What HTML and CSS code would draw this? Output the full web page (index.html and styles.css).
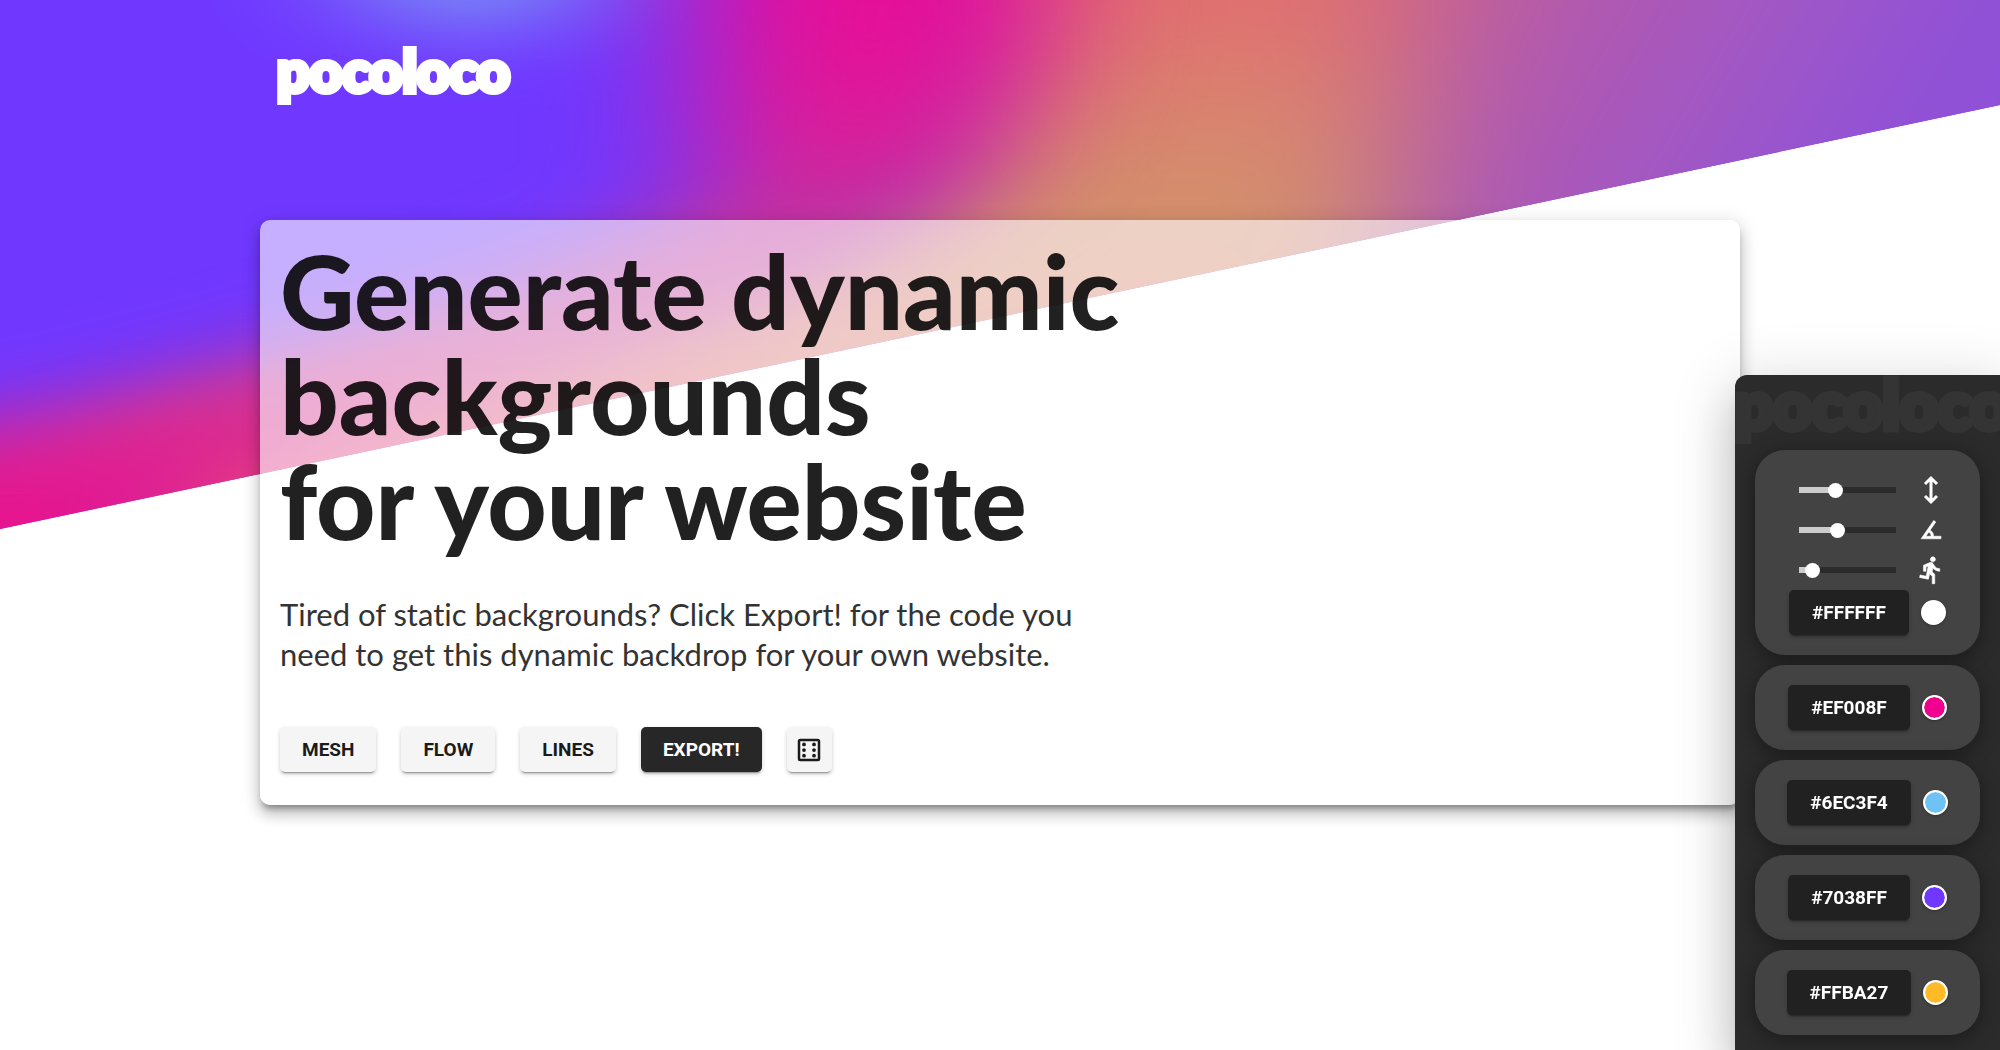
FILE: index.html
```
<!DOCTYPE html>
<html lang="en">
  <head>
    <meta charset="utf-8">
    <title>pocoloco</title>
    <link rel="stylesheet" href="styles.css">
  </head>
  <body>
    <svg class="backdrop" viewBox="0 0 2000 529" preserveAspectRatio="none" aria-hidden="true">
      <defs>
        <clipPath id="slope"><path d="M0 0H2000V105L0 529Z"/></clipPath>
        <filter id="wide" filterUnits="userSpaceOnUse" x="-600" y="-600" width="3200" height="1800" color-interpolation-filters="sRGB">
          <feGaussianBlur stdDeviation="80 30"/>
        </filter>
        <filter id="soft" filterUnits="userSpaceOnUse" x="-600" y="-600" width="3200" height="1800" color-interpolation-filters="sRGB">
          <feGaussianBlur stdDeviation="76 36"/>
        </filter>
        <linearGradient id="right" x1="1300" y1="0" x2="1800" y2="300" gradientUnits="userSpaceOnUse">
          <stop offset="0" stop-color="#cc6a86"/>
          <stop offset=".4" stop-color="#b258ae"/>
          <stop offset=".75" stop-color="#9e58c8"/>
          <stop offset="1" stop-color="#8f50d8"/>
        </linearGradient>
        <linearGradient id="warm" x1="0" y1="0" x2="0" y2="500" gradientUnits="userSpaceOnUse">
          <stop offset="0" stop-color="#e07070"/>
          <stop offset=".26" stop-color="#d8866f"/>
          <stop offset=".44" stop-color="#d2906c"/>
          <stop offset=".7" stop-color="#da8070"/>
          <stop offset="1" stop-color="#e84c7c"/>
        </linearGradient>
        <linearGradient id="pink" x1="0" y1="0" x2="0" y2="530" gradientUnits="userSpaceOnUse">
          <stop offset="0" stop-color="#e60e98"/>
          <stop offset=".25" stop-color="#dc1c98"/>
          <stop offset=".42" stop-color="#c4309c"/>
          <stop offset=".65" stop-color="#d03c90"/>
          <stop offset=".85" stop-color="#e0208f"/>
          <stop offset="1" stop-color="#e8128f"/>
        </linearGradient>
      </defs>
      <g clip-path="url(#slope)">
        <path fill="#7038ff" d="M0 0H2000V529H0Z"/>
        <g filter="url(#wide)">
          <path fill="url(#right)" d="M1350-400H2600V1000H1350Z"/>
          <path fill="url(#warm)" d="M950-400H1440L1400 100L1350 600L100 900V440L480 350L700 290L900 200L940 100Z"/>
        </g>
        <g filter="url(#soft)">
          <path fill="url(#pink)" d="M700-400H1070L1040 60L970 190L830 280L560 380L330 450L200 500L120 700H-400V425L0 425L280 355L520 290L700 210L700 100Z"/>
          <ellipse fill="#7c98f4" cx="470" cy="-30" rx="120" ry="60"/>
        </g>
      </g>
    </svg>

    <div class="container">
      <header class="header">
        <a class="logo" href="#">pocoloco</a>
      </header>
      <main class="card">
        <h1>Generate dynamic<br>backgrounds<br>for your website</h1>
        <p>
          Tired of static backgrounds? Click Export! for the code you<br>
          need to get this dynamic backdrop for your own website.
        </p>
        <div class="actions">
          <button class="btn" type="button">MESH</button>
          <button class="btn" type="button">FLOW</button>
          <button class="btn" type="button">LINES</button>
          <button class="btn btn-dark" type="button">EXPORT!</button>
          <button class="btn btn-icon" type="button" aria-label="Randomize">
            <svg class="icon" viewBox="0 0 24 24">
              <rect x="4" y="4" width="16" height="16" rx="1" fill="none" stroke="currentColor" stroke-width="2"/>
              <circle cx="8" cy="7.5" r="1.5"/><circle cx="8" cy="12" r="1.5"/><circle cx="8" cy="16.5" r="1.5"/>
              <circle cx="16" cy="7.5" r="1.5"/><circle cx="16" cy="12" r="1.5"/><circle cx="16" cy="16.5" r="1.5"/>
            </svg>
          </button>
        </div>
      </main>
    </div>

    <aside class="panel">
      <div class="panel-logo" aria-hidden="true">pocoloco</div>
      <div class="group">
        <label class="setting">
          <input class="slider" type="range" min="0" max="100" value="35" style="--value: 35%" aria-label="Height">
          <svg class="icon" viewBox="0 0 24 24">
            <path d="M12 3V21M7.2 7.2L12 2.4L16.8 7.2M7.2 16.8L12 21.6L16.8 16.8" fill="none" stroke="currentColor" stroke-width="2.4"/>
          </svg>
        </label>
        <label class="setting">
          <input class="slider" type="range" min="0" max="100" value="38" style="--value: 38%" aria-label="Angle">
          <svg class="icon" viewBox="0 0 24 24">
            <path stroke="currentColor" stroke-width=".5" d="M20,19H4.09L14.18,4.43L15.82,5.57L11.28,12.13C12.89,12.96 14,14.62 14,16.54C14,16.7 14,16.85 13.97,17H20V19M7.91,17H11.96C12,16.85 12,16.7 12,16.54C12,15.28 11.24,14.22 10.14,13.78L7.91,17Z"/>
          </svg>
        </label>
        <label class="setting">
          <input class="slider" type="range" min="0" max="100" value="7" style="--value: 7%" aria-label="Speed">
          <svg class="icon" viewBox="0 0 24 24">
            <path d="M13.49,5.48C14.59,5.48 15.49,4.58 15.49,3.48C15.49,2.38 14.59,1.48 13.49,1.48C12.39,1.48 11.49,2.38 11.49,3.48C11.49,4.58 12.39,5.48 13.49,5.48M9.89,19.38L10.89,14.98L12.99,16.98V22.98H14.99V15.48L12.89,13.48L13.49,10.48C14.79,11.98 16.79,12.98 18.99,12.98V10.98C17.09,10.98 15.49,9.98 14.69,8.58L13.69,6.98C13.29,6.38 12.69,5.98 11.99,5.98C11.69,5.98 11.49,6.08 11.19,6.08L5.99,8.28V12.98H7.99V9.58L9.79,8.88L8.19,16.98L3.29,15.98L2.89,17.98L9.89,19.38Z" stroke="currentColor" stroke-width=".5"/>
          </svg>
        </label>
        <div class="color">
          <button class="btn btn-hex" type="button">#FFFFFF</button>
          <input class="swatch" type="color" value="#ffffff" aria-label="Background color">
        </div>
      </div>
      <div class="group">
        <div class="color">
          <button class="btn btn-hex" type="button">#EF008F</button>
          <input class="swatch" type="color" value="#ef008f" aria-label="Color 1">
        </div>
      </div>
      <div class="group">
        <div class="color">
          <button class="btn btn-hex" type="button">#6EC3F4</button>
          <input class="swatch" type="color" value="#6ec3f4" aria-label="Color 2">
        </div>
      </div>
      <div class="group">
        <div class="color">
          <button class="btn btn-hex" type="button">#7038FF</button>
          <input class="swatch" type="color" value="#7038ff" aria-label="Color 3">
        </div>
      </div>
      <div class="group">
        <div class="color">
          <button class="btn btn-hex" type="button">#FFBA27</button>
          <input class="swatch" type="color" value="#ffba27" aria-label="Color 4">
        </div>
      </div>
    </aside>
  </body>
</html>
```
FILE: styles.css
```
* {
  box-sizing: border-box;
}

body {
  margin: 0;
  min-height: 100vh;
  background-color: #fff;
  font-family: Lato, sans-serif;
  color: #212121;
}

.backdrop {
  position: absolute;
  top: 0;
  left: 0;
  width: 100%;
  height: 529px;
  z-index: -1;
}

.container {
  max-width: 1480px;
  margin: 0 auto;
}

.header {
  height: 220px;
  padding: 38px 17px;
}

h1,
.logo,
.panel-logo {
  font-family: "Lato Black", Lato, sans-serif;
  font-weight: 900;
}

.logo,
.panel-logo {
  line-height: 64px;
  text-decoration: none;
}

.logo {
  font-size: 57px;
  color: #fff;
  -webkit-text-stroke: 6px #fff;
}

.card {
  padding: 18px 20px 33px;
  border-radius: 10px;
  background-color: rgba(255, 255, 255, .6);
  box-shadow: 0 6px 6px -3px rgba(0, 0, 0, .35), 0 10px 13px 1px rgba(0, 0, 0, .14), 0 4px 18px 3px rgba(0, 0, 0, .12);
}

h1 {
  margin: 0;
  font-size: 103px;
  line-height: 105px;
  color: rgba(0, 0, 0, .87);
}

p {
  margin: 41px 0 53px;
  font-size: 31px;
  line-height: 40px;
  font-variant-ligatures: none;
  color: #333;
}

.actions {
  display: flex;
  gap: 25px;
}

.btn {
  height: 45px;
  padding: 0 22px;
  border: 0;
  border-radius: 5px;
  background-color: #f5f5f5;
  font-family: Roboto, sans-serif;
  font-size: 19px;
  font-weight: 700;
  color: #1b1b1b;
  box-shadow: 0 3px 2px -2px rgba(0, 0, 0, .35), 0 2px 4px rgba(0, 0, 0, .2);
}

.btn-dark {
  background-color: #272727;
  color: #fff;
}

.btn-icon {
  width: 45px;
  padding: 0;
}

.btn-hex {
  padding: 0 23px;
  background-color: #212121;
  color: #fff;
}

.icon {
  display: block;
  width: 30px;
  height: 30px;
  margin: auto;
  fill: currentColor;
}

.panel {
  position: fixed;
  right: 0;
  bottom: 0;
  width: 265px;
  padding: 0 20px 15px;
  border-top-left-radius: 12px;
  overflow: hidden;
  background-color: #2b2b2b;
  color: #fff;
  box-shadow: 0 14px 19px -9px rgba(0, 0, 0, .2), 0 30px 48px 4px rgba(0, 0, 0, .14), 0 11px 58px 10px rgba(0, 0, 0, .12);
}

.panel-logo {
  height: 75px;
  margin-left: -20px;
  font-size: 67px;
  line-height: 56px;
  color: #343434;
  -webkit-text-stroke: 7px #343434;
}

.group {
  margin-bottom: 10px;
  padding: 20px 34px;
  border-radius: 30px;
  background-color: #434343;
  box-shadow: 0 4px 20px rgba(0, 0, 0, .4);
}

.group:last-child {
  margin-bottom: 0;
}

.setting {
  display: flex;
  align-items: center;
  justify-content: space-between;
  height: 40px;
  padding-left: 10px;
}

.setting .icon {
  margin: 0;
}

.slider {
  width: 97px;
  height: 6px;
  margin: 0;
  appearance: none;
  background: linear-gradient(to right, #ccc var(--value), #2b2b2b var(--value));
}

.slider::-webkit-slider-thumb {
  width: 15px;
  height: 15px;
  appearance: none;
  border-radius: 50%;
  background-color: #fff;
}

.color {
  display: flex;
  align-items: center;
  justify-content: center;
  gap: 12px;
}

.swatch {
  flex: none;
  width: 25px;
  height: 25px;
  padding: 0;
  border: 2px solid #fff;
  border-radius: 50%;
  appearance: none;
  overflow: hidden;
  background-color: #fff;
  box-shadow: 0 1px 3px rgba(0, 0, 0, .3);
}

.swatch::-webkit-color-swatch-wrapper {
  padding: 0;
}

.swatch::-webkit-color-swatch {
  border: 0;
  border-radius: 50%;
}
```
